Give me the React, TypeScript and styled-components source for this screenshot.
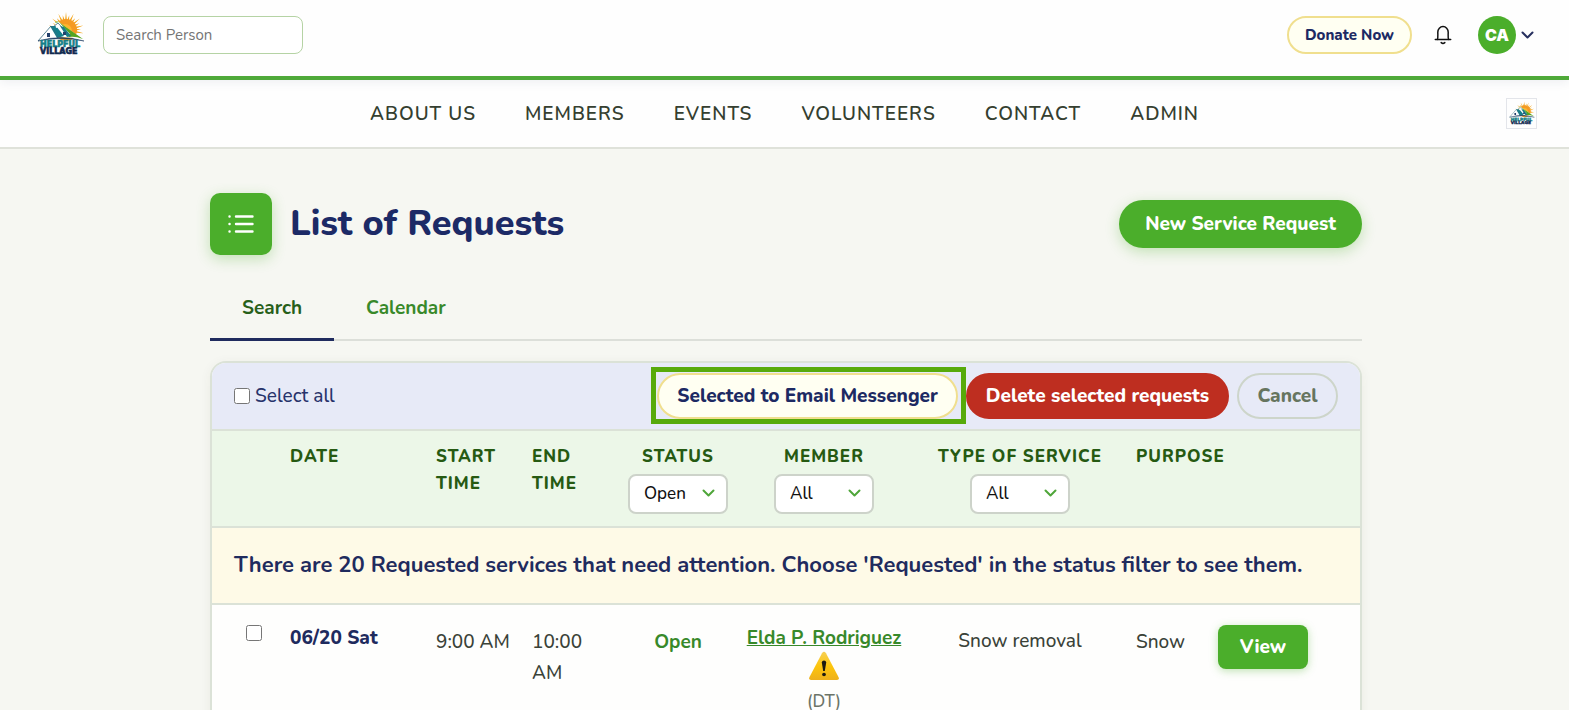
import React from 'react';
import styled, { createGlobalStyle, css } from 'styled-components';

const GlobalStyle = createGlobalStyle`
  *, *::before, *::after { box-sizing: border-box; }
  body {
    margin: 0;
    background: #f6f7f2;
    color: #3a4238;
    font-family: Nunito, Lato, "Open Sans", sans-serif;
    font-size: 19px;
    font-weight: 500;
    overflow-x: hidden;
  }
  button, input, select { font-family: inherit; }
`;

const pillBase = css`
  display: inline-flex;
  align-items: center;
  justify-content: center;
  border-radius: 24px;
  font-weight: 800;
  white-space: nowrap;
  cursor: pointer;
`;

const TopBar = styled.header`
  position: relative;
  display: flex;
  align-items: center;
  height: 80px;
  padding: 0 35px 6px 37px;
  background: #fefefe;
  border-bottom: 4px solid #4fa939;
  box-shadow: 0 2px 10px rgba(40, 50, 90, 0.08);
`;

const SearchInput = styled.input`
  width: 200px;
  height: 38px;
  margin-left: 18px;
  padding: 0 12px;
  border: 1px solid #b5d3a4;
  border-radius: 8px;
  background: #fff;
  font-size: 15px;
  &::placeholder { color: #757575; opacity: 1; }
`;

const UserArea = styled.div`
  display: flex;
  align-items: center;
  margin-left: auto;
`;

const DonateButton = styled.button`
  ${pillBase}
  min-width: 125px;
  height: 38px;
  border: 2px solid #f0df8e;
  background: #fffff2;
  color: #1d2a63;
  font-size: 15px;
`;

const IconButton = styled.button`
  display: flex;
  padding: 0;
  margin-left: 21px;
  border: 0;
  background: none;
  color: #111;
`;

const AccountButton = styled.button`
  display: flex;
  align-items: center;
  gap: 5px;
  margin-left: 25px;
  padding: 0;
  border: 0;
  background: none;
  color: #27305f;
`;

const Avatar = styled.span`
  display: grid;
  place-items: center;
  width: 38px;
  height: 38px;
  border-radius: 50%;
  background: #4bae2b;
  color: #fff;
  font-family: Inter, sans-serif;
  font-size: 16px;
  font-weight: 900;
`;

const NavBar = styled.nav`
  display: grid;
  grid-template-columns: 1fr auto 1fr;
  align-items: center;
  height: 69px;
  padding: 0 32px;
  background: #fefefe;
  border-bottom: 2px solid #dfe2da;
`;

const NavLinks = styled.div`
  grid-column: 2;
  display: flex;
  gap: 49px;
`;

const NavLink = styled.a`
  color: #353f30;
  font-size: 19px;
  font-weight: 600;
  letter-spacing: 1px;
  line-height: 24px;
  text-decoration: none;
`;

const VillageLink = styled.a`
  display: grid;
  place-items: center;
  justify-self: end;
  width: 31px;
  height: 31px;
  border: 1px solid #e3e5ea;
`;

const Main = styled.main`
  padding: 44px 29px 0 32px;
`;

const Content = styled.div`
  max-width: 1152px;
  margin: 0 auto;
`;

const TitleRow = styled.div`
  display: flex;
  align-items: center;
  gap: 18px;
`;

const TitleIcon = styled.span`
  display: grid;
  place-items: center;
  width: 62px;
  height: 62px;
  border-radius: 10px;
  background: #4bae2b;
  box-shadow: 0 4px 14px rgba(75, 174, 43, 0.3);
`;

const Title = styled.h1`
  margin: 0;
  color: #1c2a66;
  font-size: 36px;
  font-weight: 800;
  line-height: 46px;
`;

const NewButton = styled.button`
  ${pillBase}
  min-width: 243px;
  height: 48px;
  margin-left: auto;
  border: 0;
  background: #4bae2b;
  box-shadow: 0 4px 14px rgba(75, 174, 43, 0.3);
  color: #fff;
  font-size: 19px;
`;

const Tabs = styled.div`
  display: flex;
  height: 66px;
  margin: 20px 0;
  border-bottom: 2px solid #dcdfd9;
`;

const Tab = styled.a<{ $active?: boolean }>`
  display: flex;
  align-items: center;
  height: 66px;
  padding: 3px 32px 0;
  border-bottom: 3px solid ${p => (p.$active ? '#1f2b5e' : 'transparent')};
  color: ${p => (p.$active ? '#27601a' : '#38892a')};
  font-weight: 700;
  text-decoration: none;
`;

const Card = styled.section`
  border: 2px solid #dbe2d7;
  border-radius: 16px;
  overflow: hidden;
  background: #fefefd;
  box-shadow: 0 2px 12px rgba(60, 60, 40, 0.06);
`;

const Toolbar = styled.div`
  display: flex;
  align-items: center;
  gap: 8px;
  height: 68px;
  padding: 0 22px;
  border-bottom: 2px solid #dbe2d7;
  background: #e7eaf7;
`;

const SelectAll = styled.label`
  display: flex;
  align-items: center;
  gap: 5px;
  margin-right: auto;
  color: #27336b;
`;

const Checkbox = styled.input`
  display: block;
  width: 16px;
  height: 16px;
  margin: 0;
`;

const ActionButton = styled.button<{ $tone: 'mail' | 'danger' | 'plain' }>`
  ${pillBase}
  height: 46px;
  padding: 0 18px;
  font-size: 19px;
  ${p => p.$tone === 'mail' && css`
    min-width: 300px;
    border: 2px solid #f0df8e;
    background: #fffff2;
    color: #1d2a63;
  `}
  ${p => p.$tone === 'danger' && css`
    min-width: 263px;
    border: 2px solid #be2e20;
    background: #be2e20;
    color: #fff;
  `}
  ${p => p.$tone === 'plain' && css`
    min-width: 101px;
    border: 2px solid #cdd5ca;
    background: transparent;
    color: #66755f;
  `}
`;

const Highlight = styled.span`
  position: relative;
  display: flex;
  &::after {
    content: '';
    position: absolute;
    inset: -6px -8px -5px -6px;
    border: 5px solid #57aa0b;
    pointer-events: none;
  }
`;

const Table = styled.table`
  width: 100%;
  table-layout: fixed;
  border-collapse: separate;
  border-spacing: 0;
`;

const HeadCell = styled.th<{ $center?: boolean }>`
  height: 97px;
  padding: ${p => (p.$center ? '12px 0' : '12px 10px')};
  border-bottom: 2px solid #dbe2d7;
  background: #ecf7e8;
  color: #265a12;
  font-size: 17px;
  font-weight: 800;
  letter-spacing: 1px;
  line-height: 27px;
  text-align: ${p => (p.$center ? 'center' : 'left')};
  text-transform: uppercase;
  white-space: ${p => (p.$center ? 'nowrap' : 'normal')};
  vertical-align: top;
`;

const FilterBox = styled.span`
  position: relative;
  display: block;
  width: 100px;
  margin: 4px auto 0;
  svg {
    position: absolute;
    right: 13px;
    top: 15px;
    pointer-events: none;
  }
`;

const Filter = styled.select`
  appearance: none;
  display: block;
  width: 100%;
  height: 40px;
  padding: 0 14px 1px;
  border: 2px solid #cdd3ca;
  border-radius: 8px;
  background: #fff;
  color: #111;
  font-size: 17px;
  font-weight: 500;
`;

const NoticeCell = styled.td`
  height: 77px;
  padding: 0 22px 2px;
  border-bottom: 2px solid #dbe2d7;
  background: #fefae7;
  color: #1f2b5e;
  font-size: 22px;
  font-weight: 700;
  white-space: nowrap;
`;

const Cell = styled.td<{ $center?: boolean }>`
  padding: 21px 10px;
  line-height: 31px;
  text-align: ${p => (p.$center ? 'center' : 'left')};
  vertical-align: top;
`;

const TimeCell = styled(Cell)`
  padding-top: 22px;
`;

const ControlCell = styled(Cell)`
  padding-top: 20px;
`;

const CheckCell = styled(ControlCell)`
  padding-left: 34px;
`;

const DateText = styled.span`
  display: block;
  color: #1f2b5e;
  font-weight: 800;
  line-height: 24px;
`;

const StatusText = styled.span`
  color: #38892a;
  font-weight: 700;
`;

const MemberLink = styled.a`
  display: block;
  color: #38892a;
  font-weight: 700;
  line-height: 24px;
  text-decoration: underline;
  white-space: nowrap;
`;

const Initials = styled.span`
  display: block;
  margin-top: 5px;
  color: #6b7468;
  font-size: 17px;
`;

const WarningSvg = styled.svg`
  display: block;
  margin: 1px auto 0;
`;

const ViewButton = styled.button`
  ${pillBase}
  min-width: 90px;
  height: 44px;
  border: 0;
  border-radius: 8px;
  background: #4bae2b;
  box-shadow: 0 2px 8px rgba(75, 174, 43, 0.35);
  color: #fff;
  font-size: 19px;
`;

function Logo({ size }: { size: number }) {
  const rays = Array.from({ length: 17 }, (_, i) => {
    const a = Math.PI * (-0.06 + (i / 16) * 1.12);
    const o = i % 2 ? 15 : 18;
    const at = (r: number, t: number) => `${29 - r * Math.cos(t)},${19 - r * Math.sin(t)}`;
    return `M${at(10, a - 0.09)}L${at(o, a)}L${at(10, a + 0.09)}Z`;
  }).join('');
  return (
    <svg width={size} height={size} viewBox="0 0 48 48" role="img" aria-label="Helpful Village">
      <path d={rays} fill="#f3a51c" />
      <circle cx="29" cy="19" r="11" fill="#f59a22" />
      <circle cx="28" cy="20" r="7" fill="#fdb62d" />
      <path d="M1 30L15 14L19 17L23 12L47 29Q25 23 3 30Z" fill="#fff" />
      <path d="M21 10.5L46 28Q38 25 32 26L18 11Z" fill="#56a51f" />
      <path d="M13 15L19 15L27 25L20 27Z" fill="#137f8b" />
      <path d="M18 12L22 11L33 23L29 24L22 16L19 17Z" fill="#fff" />
      <path d="M23 15L27 16L34 25L30 26Z" fill="#137f8b" />
      <path d="M1 30L14 15L21 26M16 16L21 12L33 25" fill="none" stroke="#356b7d" strokeWidth="0.8" />
      <path d="M10 22h3v4h-3zM26 21h3v3h-3z" fill="#23406b" />
      <path d="M1 30Q24 23 47 30Q24 25 1 30Z" fill="#18375e" stroke="#18375e" strokeWidth=".5" />
      <g fontFamily="'DejaVu Sans', sans-serif" fontSize="8" fontWeight="700" strokeWidth=".7">
        <text x="3" y="36" fill="#147f87" stroke="#147f87">HELPFUL</text>
        <text x="3" y="43" fill="#10294f" stroke="#10294f">VILLAGE</text>
      </g>
    </svg>
  );
}

function Chevron({ color }: { color: string }) {
  return (
    <svg width="13" height="9" viewBox="0 0 13 9" fill="none" stroke={color} strokeWidth="2" strokeLinecap="round" strokeLinejoin="round" aria-hidden="true">
      <path d="M1.5 1.5L6.5 6.5L11.5 1.5" />
    </svg>
  );
}

function Bell() {
  return (
    <svg width="20" height="20" viewBox="0 0 20 20" fill="none" stroke="currentColor" strokeWidth="1.5" strokeLinecap="round" strokeLinejoin="round" aria-hidden="true">
      <path d="M2.3 14.6H17.7M4.2 14.6C5.3 12.8 4.8 10.2 4.8 7.2a5.2 5.7 0 0 1 10.4 0c0 3-.5 5.6.6 7.4" />
      <path d="M8.2 17.6q1.8 1.6 3.6 0" />
    </svg>
  );
}

function ListIcon() {
  return (
    <svg width="28" height="20" viewBox="0 0 28 20" stroke="#fff" strokeLinecap="round" strokeWidth="2.4" aria-hidden="true">
      <path d="M9 2.5H25.5M9 10H25.5M9 17.5H25.5" />
      <path d="M2.5 2.5h.1M2.5 10h.1M2.5 17.5h.1" />
    </svg>
  );
}

function Warning() {
  return (
    <WarningSvg width="32" height="30" viewBox="0 0 32 30" role="img" aria-label="Warning">
      <defs>
        <linearGradient id="warn" x1="0" y1="0" x2="0" y2="1">
          <stop offset="0" stopColor="#f6cf55" />
          <stop offset="0.5" stopColor="#fdc60c" />
          <stop offset="1" stopColor="#eeb01c" />
        </linearGradient>
      </defs>
      <path d="M14 2.2Q16 -.6 18 2.2L30.6 26.2Q31.6 29 29 29H3Q.4 29 1.4 26.2Z" fill="url(#warn)" />
      <path d="M13.8 11.5Q14 9.6 16 9.6T18.2 11.5L16.8 20H15.2Z" fill="#1c1a12" />
      <ellipse cx="16" cy="23.5" rx="1.9" ry="1.7" fill="#1c1a12" />
    </WarningSvg>
  );
}

function HeadFilter({ label, value }: { label: string; value: string }) {
  return (
    <HeadCell scope="col" $center>
      {label}
      <FilterBox>
        <Filter aria-label={label} defaultValue={value}>
          <option>{value}</option>
        </Filter>
        <Chevron color="#4fa63a" />
      </FilterBox>
    </HeadCell>
  );
}

const navItems = ['ABOUT US', 'MEMBERS', 'EVENTS', 'VOLUNTEERS', 'CONTACT', 'ADMIN'];
const columnWidths = [68, 146, 96, 100, 112, 180, 212, 82, 152];

export default function App() {
  return (
    <>
      <GlobalStyle />
      <TopBar>
        <Logo size={48} />
        <SearchInput type="search" placeholder="Search Person" aria-label="Search Person" />
        <UserArea>
          <DonateButton type="button">Donate Now</DonateButton>
          <IconButton type="button" aria-label="Notifications"><Bell /></IconButton>
          <AccountButton type="button" aria-label="Account">
            <Avatar>CA</Avatar>
            <Chevron color="currentColor" />
          </AccountButton>
        </UserArea>
      </TopBar>
      <NavBar aria-label="Main">
        <NavLinks>
          {navItems.map(item => <NavLink key={item} href="#">{item}</NavLink>)}
        </NavLinks>
        <VillageLink href="#"><Logo size={26} /></VillageLink>
      </NavBar>
      <Main>
        <Content>
          <TitleRow>
            <TitleIcon><ListIcon /></TitleIcon>
            <Title>List of Requests</Title>
            <NewButton type="button">New Service Request</NewButton>
          </TitleRow>
          <Tabs>
            <Tab href="#" $active aria-current="page">Search</Tab>
            <Tab href="#">Calendar</Tab>
          </Tabs>
          <Card>
            <Toolbar>
              <SelectAll><Checkbox type="checkbox" />Select all</SelectAll>
              <Highlight>
                <ActionButton type="button" $tone="mail">Selected to Email Messenger</ActionButton>
              </Highlight>
              <ActionButton type="button" $tone="danger">Delete selected requests</ActionButton>
              <ActionButton type="button" $tone="plain">Cancel</ActionButton>
            </Toolbar>
            <Table>
              <colgroup>
                {columnWidths.map((w, i) => <col key={i} width={w} />)}
              </colgroup>
              <thead>
                <tr>
                  <HeadCell />
                  <HeadCell scope="col">Date</HeadCell>
                  <HeadCell scope="col">Start Time</HeadCell>
                  <HeadCell scope="col">End Time</HeadCell>
                  <HeadFilter label="Status" value="Open" />
                  <HeadFilter label="Member" value="All" />
                  <HeadFilter label="Type of service" value="All" />
                  <HeadCell scope="col" colSpan={2}>Purpose</HeadCell>
                </tr>
              </thead>
              <tbody>
                <tr>
                  <NoticeCell colSpan={9}>
                    There are 20 Requested services that need attention. Choose 'Requested' in the status filter to see them.
                  </NoticeCell>
                </tr>
                <tr>
                  <CheckCell><Checkbox type="checkbox" aria-label="Select request of 06/20" /></CheckCell>
                  <Cell><DateText>06/20 Sat</DateText></Cell>
                  <TimeCell>9:00 AM</TimeCell>
                  <TimeCell>10:00<br />AM</TimeCell>
                  <TimeCell $center><StatusText>Open</StatusText></TimeCell>
                  <Cell $center>
                    <MemberLink href="#">Elda P. Rodriguez</MemberLink>
                    <Warning />
                    <Initials>(DT)</Initials>
                  </Cell>
                  <Cell $center>Snow removal</Cell>
                  <TimeCell>Snow</TimeCell>
                  <ControlCell><ViewButton type="button">View</ViewButton></ControlCell>
                </tr>
              </tbody>
            </Table>
          </Card>
        </Content>
      </Main>
    </>
  );
}
